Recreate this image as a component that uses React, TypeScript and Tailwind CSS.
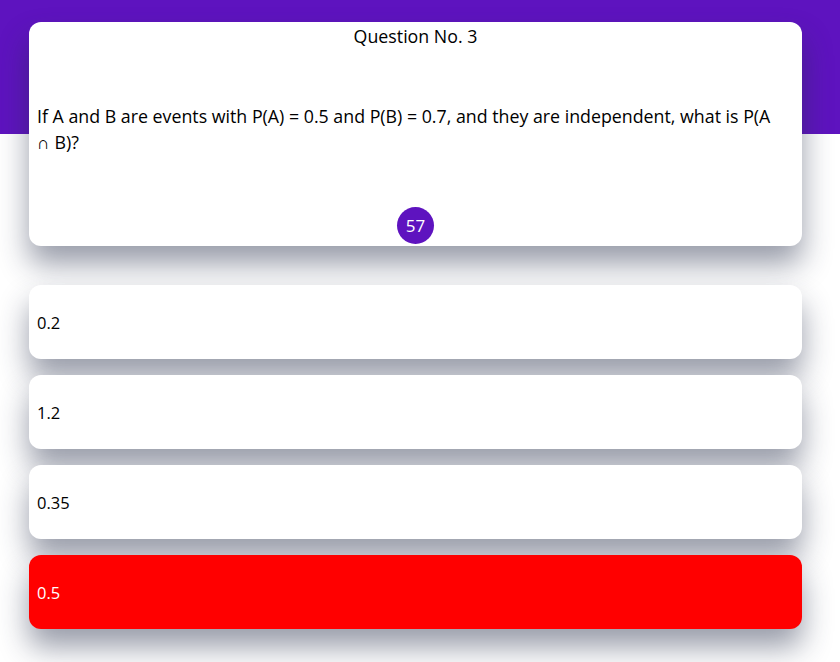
const options = ['0.2', '1.2', '0.35', '0.5'];

export default function App() {
  const selected = '0.5';

  return (
    <div
      className="min-h-[662px] bg-[linear-gradient(to_bottom,#5e13bf_0,#5e13bf_134px,#ffffff_134px)] pt-[22px] pb-8"
      style={{ fontFamily: '"Open Sans", "Noto Sans", sans-serif' }}
    >
      <div className="ml-[29px] w-[773px]">
        {/* Question card */}
        <div className="flex h-[224px] flex-col rounded-xl bg-white px-2 pt-[1px] shadow-[0_18px_30px_rgba(40,48,75,0.48)]">
          <div className="text-center text-[17.8px] leading-[27px] text-black">Question No. 3</div>
          <div className="flex flex-1 items-center">
            <p className="text-[17.8px] leading-[26px] text-black">
              If A and B are events with P(A) = 0.5 and P(B) = 0.7, and they are independent, what is P(A ∩{'\u00a0'}B)?
            </p>
          </div>
          <div className="flex justify-center pb-[2px]">
            <div className="flex h-[37px] w-[37px] items-center justify-center rounded-full bg-[#5e13bf] text-[17px] text-white">
              57
            </div>
          </div>
        </div>

        {/* Options */}
        <div className="mt-[39px] flex flex-col gap-4">
          {options.map((opt) => (
            <div
              key={opt}
              className={`flex h-[74px] items-center rounded-xl px-2 pt-[3px] text-[16.5px] shadow-[0_18px_30px_rgba(40,48,75,0.48)] ${
                opt === selected ? 'bg-[#ff0000] text-white' : 'bg-white text-black'
              }`}
            >
              {opt}
            </div>
          ))}
        </div>
      </div>
    </div>
  );
}
